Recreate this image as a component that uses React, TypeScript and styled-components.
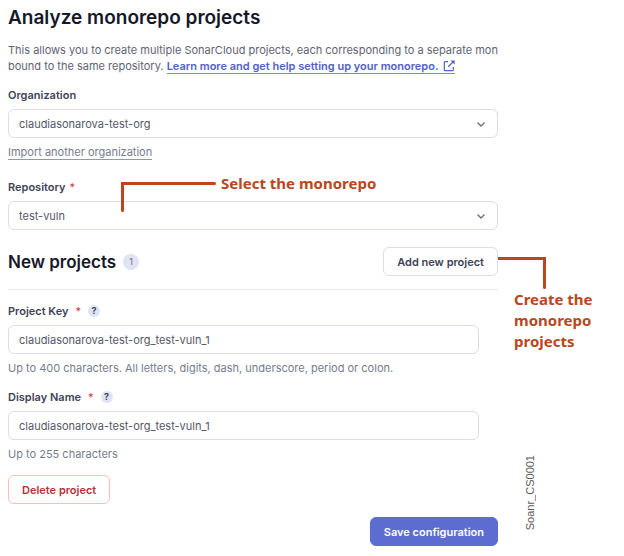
import React from "react";
import styled, { createGlobalStyle } from "styled-components";

const rust = "#b9471d";
const indigo = "#5d6cd0";
const line = "#d9ddec";

const GlobalStyle = createGlobalStyle`
  *, *::before, *::after { box-sizing: border-box; }
  body {
    margin: 0;
    background: #fff;
    color: #3e4357;
    font: 400 11px/16px Inter, "Liberation Sans", sans-serif;
  }
  button, input, select { font: inherit; color: inherit; }
`;

const Page = styled.div`
  display: grid;
  grid-template-columns: minmax(0, 1fr) 118px;
  column-gap: 8px;
  padding: 5px 0 8px 8px;
`;

const Main = styled.main`
  display: flex;
  flex-direction: column;
  align-items: stretch;
`;

const Title = styled.h1`
  margin: 0;
  color: #15172a;
  font-size: 19px;
  font-weight: 600;
  line-height: 26px;
`;

const Intro = styled.p`
  margin: 11px 0 0;
  color: #5f6275;
  white-space: nowrap;
`;

const DocLink = styled.a`
  display: inline-flex;
  align-items: center;
  gap: 5px;
  height: 16px;
  border-bottom: 1px solid #7b87d9;
  color: #5160c8;
  font-weight: 600;
  text-decoration: none;
  vertical-align: top;
`;

const Field = styled.div<{ $top: number }>`
  display: flex;
  flex-direction: column;
  align-items: flex-start;
  margin-top: ${(p) => p.$top}px;
`;

const LabelRow = styled.div<{ $gap: number }>`
  display: flex;
  align-items: center;
  gap: ${(p) => p.$gap}px;
  height: 16px;
  margin-bottom: 6px;
`;

const Label = styled.label`
  font-weight: 600;
`;

const Required = styled.span`
  color: #c5404a;
`;

const HelpButton = styled.button`
  display: grid;
  place-items: center;
  width: 12px;
  height: 12px;
  padding: 0;
  border: 0;
  border-radius: 50%;
  background: #e0e4f4;
  font-size: 9px;
  font-weight: 700;
  line-height: 12px;
`;

const SelectBox = styled.div`
  display: grid;
  align-items: center;
  width: 100%;
  > * { grid-area: 1 / 1; }
  > svg { justify-self: end; margin-right: 12px; pointer-events: none; }
`;

const Select = styled.select`
  appearance: none;
  width: 100%;
  height: 29px;
  padding: 0 32px 0 10px;
  border: 1px solid ${line};
  border-radius: 6px;
  background: #fff;
  color: #54576a;
`;

const Input = styled.input`
  width: 100%;
  height: 29px;
  padding: 0 10px;
  border: 1px solid ${line};
  border-radius: 6px;
  background: #fff;
  color: #54576a;
`;

const Hint = styled.p`
  margin: 6px 0 0;
  color: #747d8f;
`;

const ImportLink = styled.a`
  height: 16px;
  margin-top: 6px;
  border-bottom: 1px solid #8f98ac;
  color: #747d8f;
  text-decoration: none;
`;

const SectionHeader = styled.header`
  display: flex;
  align-items: center;
  margin-top: 17px;
  padding-bottom: 13px;
  border-bottom: 1px solid #e8eaf4;
`;

const SectionTitle = styled.h2`
  margin: 0;
  color: #15172a;
  font-size: 17px;
  font-weight: 600;
  line-height: 24px;
`;

const Count = styled.span`
  width: 16px;
  height: 16px;
  margin-left: 7px;
  border-radius: 50%;
  background: #dfe3f3;
  color: #696d80;
  font-size: 9px;
  text-align: center;
`;

const buttonColors = {
  plain: { border: line, fill: "#fff", text: "#3e4357" },
  danger: { border: "#fcbdb8", fill: "#fff", text: "#b5323a" },
  primary: { border: indigo, fill: indigo, text: "#fff" },
};

const Button = styled.button<{ $kind: keyof typeof buttonColors }>`
  height: 29px;
  padding: 0 13px;
  border: 1px solid ${(p) => buttonColors[p.$kind].border};
  border-radius: 6px;
  background: ${(p) => buttonColors[p.$kind].fill};
  color: ${(p) => buttonColors[p.$kind].text};
  font-weight: 600;
  white-space: nowrap;
`;

const HeaderActions = styled.div`
  position: relative;
  margin-left: auto;
`;

const ProjectForm = styled.section`
  padding-right: 19px;
`;

const ProjectActions = styled.div`
  display: flex;
  margin-top: 13px;
`;

const Footer = styled.footer`
  display: flex;
  justify-content: flex-end;
  margin-top: 13px;
`;

const Anchor = styled.div`
  position: relative;
  margin-top: 19px;
`;

const SelectCallout = styled.div`
  position: absolute;
  top: -6px;
  left: 113px;
  display: flex;
  align-items: flex-start;
  gap: 5px;
  pointer-events: none;
  > svg { margin-top: 9px; }
`;

const CreateCallout = styled.div`
  position: absolute;
  top: 10px;
  left: 100%;
  width: 120px;
  pointer-events: none;
  > svg { display: block; }
`;

const CalloutText = styled.p<{ $indent?: number }>`
  margin: 0 0 0 ${(p) => p.$indent ?? 0}px;
  color: ${rust};
  font: 700 15px/21px "Noto Sans", sans-serif;
  white-space: nowrap;
`;

const Side = styled.aside`
  display: flex;
  align-items: flex-end;
  padding: 0 0 16px 17px;
`;

const FigureCode = styled.span`
  color: #5c5c5c;
  font: 400 11px/14px "Liberation Sans", sans-serif;
  writing-mode: vertical-rl;
  transform: rotate(180deg);
`;

const Chevron = () => (
  <svg width="10" height="10" viewBox="0 0 10 10" fill="none" aria-hidden="true">
    <path d="M1.5 3.5 5 7l3.5-3.5" stroke="#696d80" strokeWidth="1.3" />
  </svg>
);

const ExternalIcon = () => (
  <svg width="12" height="12" viewBox="0 0 12 12" fill="none" aria-hidden="true">
    <path d="M5 1.7H2.2q-.9 0-.9.9v7.2q0 .9.9.9h7.2q.9 0 .9-.9V7" stroke="#5160c8" strokeWidth="1.2" />
    <path d="M5.2 6.8 9.6 2.4" stroke="#5160c8" strokeWidth="1.3" />
    <path d="M7.4.4h4.2v4.2z" fill="#5160c8" />
  </svg>
);

type SelectFieldProps = {
  id: string;
  label: string;
  value: string;
  required?: boolean;
  top: number;
  children?: React.ReactNode;
};

const SelectField = ({ id, label, value, required, top, children }: SelectFieldProps) => (
  <Field $top={top}>
    <LabelRow $gap={4}>
      <Label htmlFor={id}>{label}</Label>
      {required && <Required>*</Required>}
    </LabelRow>
    <SelectBox>
      <Select id={id} defaultValue={value}>
        <option>{value}</option>
      </Select>
      <Chevron />
    </SelectBox>
    {children}
  </Field>
);

type TextFieldProps = { id: string; label: string; hint: string; top: number };

const TextField = ({ id, label, hint, top }: TextFieldProps) => (
  <Field $top={top}>
    <LabelRow $gap={7}>
      <Label htmlFor={id}>{label}</Label>
      <Required>*</Required>
      <HelpButton type="button" aria-label={`Help for ${label}`}>?</HelpButton>
    </LabelRow>
    <Input id={id} defaultValue="claudiasonarova-test-org_test-vuln_1" />
    <Hint>{hint}</Hint>
  </Field>
);

export default function App() {
  return (
    <>
      <GlobalStyle />
      <Page>
        <Main>
          <Title>Analyze monorepo projects</Title>
          <Intro>
            This allows you to create multiple SonarCloud projects, each corresponding to a separate mon
            <br />
            bound to the same repository.{" "}
            <DocLink href="#docs">
              Learn more and get help setting up your monorepo.
              <ExternalIcon />
            </DocLink>
          </Intro>

          <SelectField id="organization" label="Organization" value="claudiasonarova-test-org" top={13}>
            <ImportLink href="#import">Import another organization</ImportLink>
          </SelectField>

          <Anchor>
            <SelectField id="repository" label="Repository" value="test-vuln" required top={0} />
            <SelectCallout>
              <svg width="95" height="31" viewBox="0 0 95 31" fill="none" aria-hidden="true">
                <path d="M1.5 28.5v-27h92" stroke={rust} strokeWidth="3" strokeLinecap="round" />
              </svg>
              <CalloutText>Select the monorepo</CalloutText>
            </SelectCallout>
          </Anchor>

          <SectionHeader>
            <SectionTitle>New projects</SectionTitle>
            <Count>1</Count>
            <HeaderActions>
              <Button type="button" $kind="plain">Add new project</Button>
              <CreateCallout>
                <svg width="48" height="32" viewBox="0 0 48 32" fill="none" aria-hidden="true">
                  <path d="M0 1.5h46.5v29" stroke={rust} strokeWidth="3" strokeLinecap="round" />
                </svg>
                <CalloutText $indent={16}>
                  Create the
                  <br />
                  monorepo
                  <br />
                  projects
                </CalloutText>
              </CreateCallout>
            </HeaderActions>
          </SectionHeader>

          <ProjectForm>
            <TextField
              id="project-key"
              label="Project Key"
              hint="Up to 400 characters. All letters, digits, dash, underscore, period or colon."
              top={13}
            />
            <TextField id="display-name" label="Display Name" hint="Up to 255 characters" top={13} />
            <ProjectActions>
              <Button type="button" $kind="danger">Delete project</Button>
            </ProjectActions>
          </ProjectForm>

          <Footer>
            <Button type="submit" $kind="primary">Save configuration</Button>
          </Footer>
        </Main>
        <Side>
          <FigureCode>Soanr_CS0001</FigureCode>
        </Side>
      </Page>
    </>
  );
}
